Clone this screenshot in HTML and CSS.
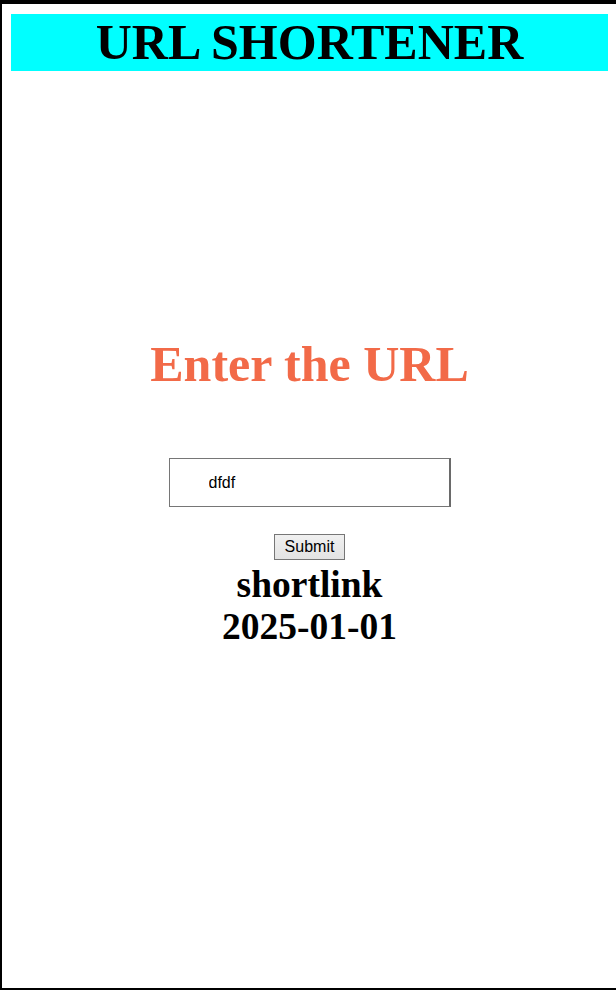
FILE: index.html
```html
<!DOCTYPE html>
<html lang="en">
<head>
<meta charset="utf-8">
<title>URL Shortener</title>
<link rel="stylesheet" href="styles.css">
</head>
<body>
<div class="page">
  <h1 class="banner">URL SHORTENER</h1>
  <main class="main">
    <h2 class="prompt">Enter the URL</h2>
    <form class="form">
      <input class="url-input" type="text" value="dfdf">
      <button class="submit" type="button">Submit</button>
    </form>
    <div class="result">
      <div class="result-line">shortlink</div>
      <div class="result-line">2025-01-01</div>
    </div>
  </main>
</div>
</body>
</html>
```
FILE: styles.css
```css
html, body {
  margin: 0;
  padding: 0;
  background: #fff;
}

.page {
  box-sizing: border-box;
  height: 990px;
  border-top: 4px solid #000;
  border-left: 2px solid #000;
  border-bottom: 2px solid #000;
  padding: 10px 8px 0 9px;
  font-family: "Liberation Serif", "Times New Roman", serif;
  display: flex;
  flex-direction: column;
}

.banner {
  margin: 0;
  height: 57px;
  background: #00ffff;
  color: #000;
  font-size: 50px;
  font-weight: bold;
  line-height: 57px;
  text-align: center;
}

.main {
  display: flex;
  flex-direction: column;
  align-items: center;
  padding-top: 266px;
}

.prompt {
  margin: 0;
  font-size: 50px;
  font-weight: bold;
  line-height: 54px;
  color: #f26a48;
}

.form {
  display: flex;
  flex-direction: column;
  align-items: center;
  margin-top: 67px;
}

.url-input {
  box-sizing: border-box;
  width: 282px;
  height: 49px;
  margin: 0;
  padding: 0 0 0 39px;
  border: 1px solid #767676;
  border-right: 2px solid #6a6a6a;
  font-family: "Liberation Sans", Arial, sans-serif;
  font-size: 16px;
  color: #000;
  background: #fff;
  outline: none;
}

.submit {
  box-sizing: border-box;
  margin-top: 27px;
  width: 71px;
  height: 26px;
  padding: 0;
  border: 1px solid #767676;
  border-radius: 0;
  background: linear-gradient(#f0f0f0, #e3e3e3);
  font-family: "Liberation Sans", Arial, sans-serif;
  font-size: 16px;
  color: #000;
}

.result {
  margin-top: 4px;
  display: flex;
  flex-direction: column;
  align-items: center;
}

.result-line {
  font-size: 37.5px;
  font-weight: bold;
  line-height: 42px;
  color: #000;
}
```
